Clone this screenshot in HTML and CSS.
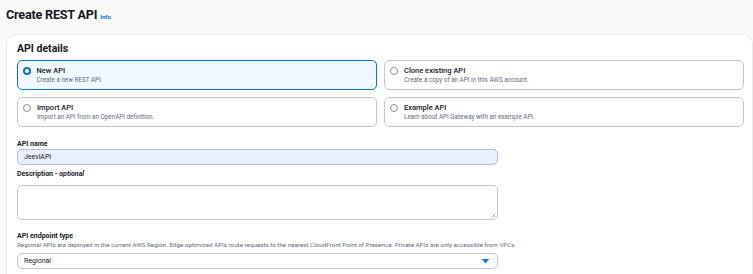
FILE: index.html
```html
<!DOCTYPE html>
<html>
<head>
<meta charset="utf-8">
<link rel="stylesheet" href="styles.css">
</head>
<body>
<div class="page">
  <h1 class="title">Create REST API <a class="info">Info</a></h1>
  <div class="card">
    <h2 class="card-title">API details</h2>
    <div class="tiles">
      <div class="tile selected">
        <span class="radio on"></span>
        <div><div class="tile-name">New API</div><div class="tile-desc">Create a new REST API.</div></div>
      </div>
      <div class="tile">
        <span class="radio"></span>
        <div><div class="tile-name">Clone existing API</div><div class="tile-desc">Create a copy of an API in this AWS account.</div></div>
      </div>
      <div class="tile">
        <span class="radio"></span>
        <div><div class="tile-name">Import API</div><div class="tile-desc">Import an API from an OpenAPI definition.</div></div>
      </div>
      <div class="tile">
        <span class="radio"></span>
        <div><div class="tile-name">Example API</div><div class="tile-desc">Learn about API Gateway with an example API.</div></div>
      </div>
    </div>
    <div class="field f1">
      <div class="label">API name</div>
      <div class="input filled">JeeviAPI</div>
    </div>
    <div class="field f2">
      <div class="label">Description - <i>optional</i></div>
      <div class="textarea"><svg class="grip" width="6" height="6" viewBox="0 0 6 6"><path d="M5.5 1.5L1.5 5.5M5.5 3.8L3.8 5.5" stroke="#8d8d8d" stroke-width="0.8"/></svg></div>
    </div>
    <div class="field f3">
      <div class="label">API endpoint type</div>
      <div class="hint">Regional APIs are deployed in the current AWS Region. Edge-optimized APIs route requests to the nearest CloudFront Point of Presence. Private APIs are only accessible from VPCs.</div>
      <div class="select">Regional<svg class="caret" width="7" height="5" viewBox="0 0 7 5"><path d="M0 0H7L3.5 4.5Z" fill="#0972d3"/></svg></div>
    </div>
  </div>
</div>
</body>
</html>
```
FILE: styles.css
```css
* { box-sizing: border-box; }
html, body { margin: 0; padding: 0; }
body { background: #fafafa; font-family: Roboto, "Open Sans", sans-serif; color: #16191f; width: 753px; height: 274px; overflow: hidden; }
.page { padding: 5px 0 0 6px; }
.title { margin: 0; font-size: 12.6px; font-weight: 700; line-height: 20px; letter-spacing: -0.2px; display: flex; align-items: baseline; gap: 3px; }
.info { font-size: 6px; color: #0972d3; font-weight: 700; letter-spacing: 0; }
.card { margin-top: 7px; width: 747px; background: #fff; border: 1px solid #e9ebed; border-radius: 10px; padding: 4px 7px 0 10px; height: 260px; }
.card-title { margin: 0; font-size: 10.5px; font-weight: 700; line-height: 20px; }
.tiles { margin-top: 1px; display: grid; grid-template-columns: 360px 360px; column-gap: 7px; row-gap: 7px; }
.tile { height: 30px; border: 1px solid #c6c6cd; border-radius: 5px; display: flex; align-items: flex-start; padding: 5px 0 0 5px; gap: 6px; background: #fff; }
.tile.selected { border: 1.5px solid #0972d3; background: #f0f8ff; padding: 4.5px 0 0 4.5px; }
.radio { width: 8px; height: 8px; border-radius: 50%; border: 1px solid #8c8c94; margin-top: 1px; flex: none; background: #fff; }
.radio.on { border: 2.5px solid #0972d3; }
.tile-name { font-size: 7.5px; line-height: 10px; font-weight: 500; }
.tile-desc { font-size: 6.3px; line-height: 9px; color: #5f6b7a; }
.label { font-size: 7px; font-weight: 700; line-height: 8px; }
.label i { font-weight: 700; }
.f1 { margin-top: 13px; }
.f2 { margin-top: 5px; }
.f3 { margin-top: 12px; }
.input { margin-top: 1px; width: 481px; height: 16px; border: 1px solid #c6c6cd; border-radius: 5px; font-size: 7px; line-height: 14px; padding-left: 6px; }
.input.filled { background: #e8f0fe; border-color: #b6bec9; }
.textarea { margin-top: 7px; width: 481px; height: 35px; border: 1px solid #c6c6cd; border-radius: 5px; position: relative; }
.grip { position: absolute; right: 1px; bottom: 1px; }
.hint { margin-top: 1px; font-size: 6.25px; color: #5f6b7a; line-height: 8px; }
.select { margin-top: 4px; width: 481px; height: 16px; border: 1px solid #c6c6cd; border-radius: 5px; font-size: 7px; line-height: 14px; padding: 0 8px 0 6px; display: flex; justify-content: space-between; align-items: center; }
```
